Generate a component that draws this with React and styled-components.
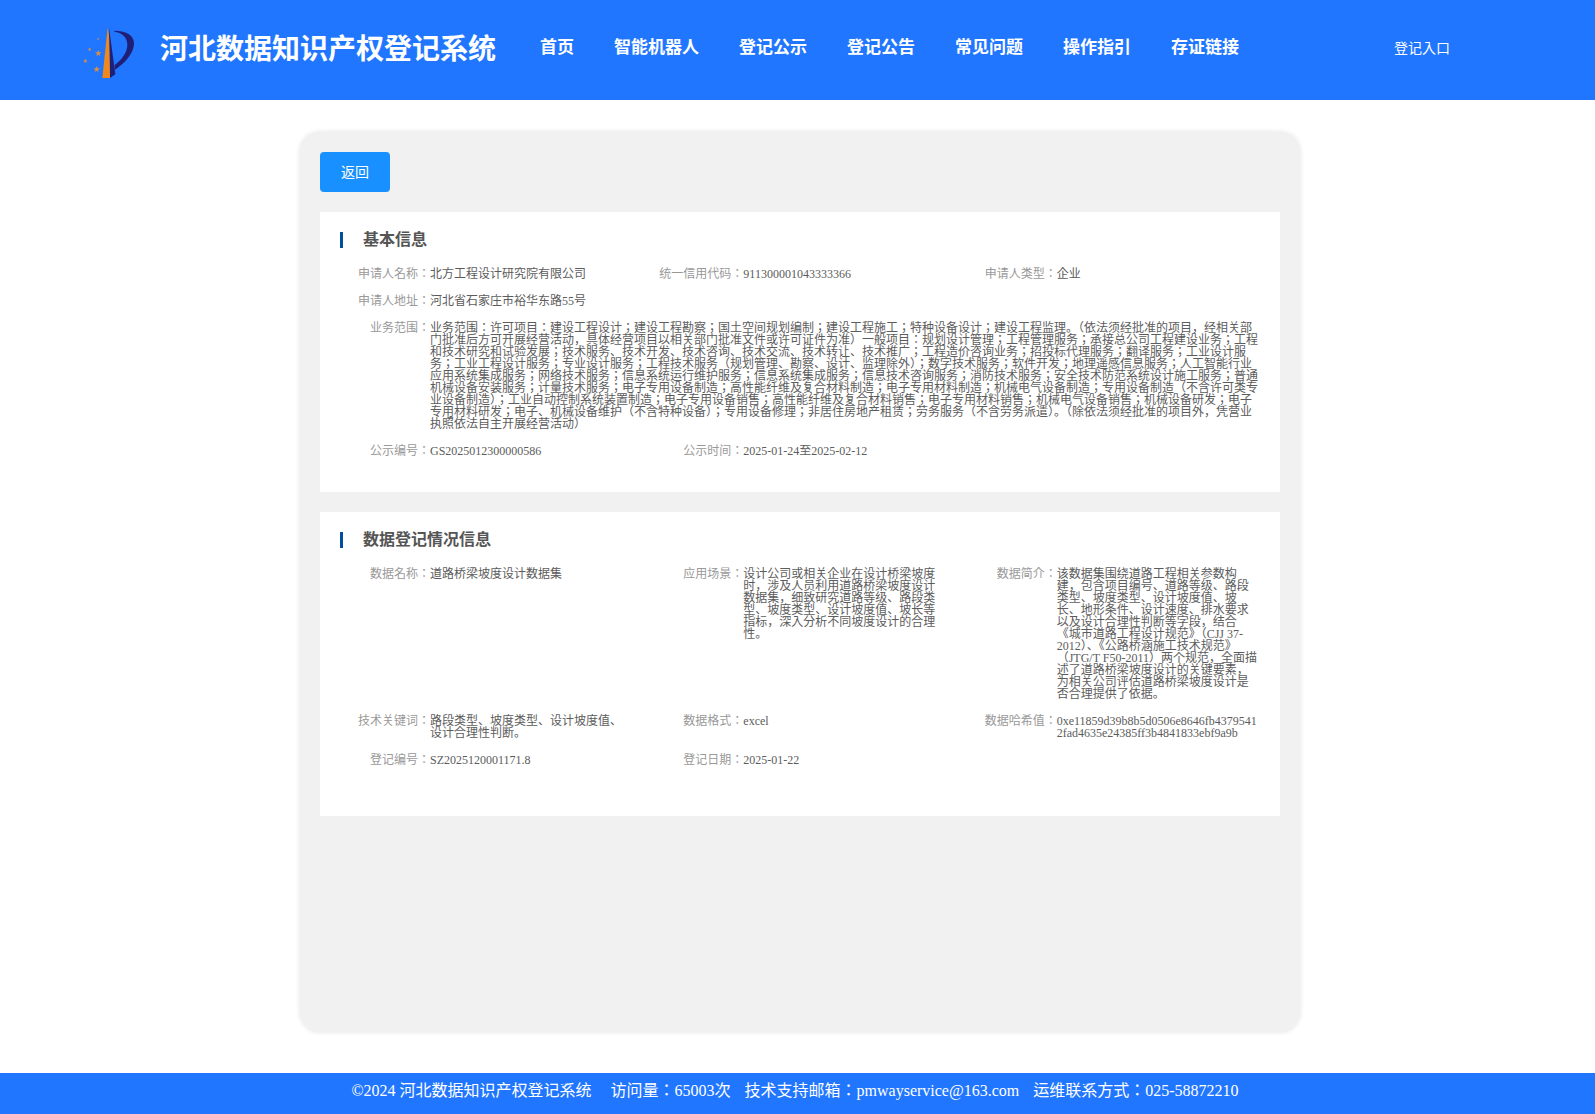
import React from 'react'
import styled, { createGlobalStyle } from 'styled-components'

const GlobalStyle = createGlobalStyle`
  html, body {
    margin: 0;
    padding: 0;
    background: #fff;
    font-family: "Liberation Serif", "Noto Sans CJK JP", serif;
  }
`

const Header = styled.header`
  height: 100px;
  background-color: #2176ff;
  display: flex;
  align-items: center;
  padding-left: 82px;
  color: #fff;
  font-family: "Liberation Sans", "Noto Sans CJK JP", sans-serif;
`

const LogoMark = styled.svg`
  width: 56px;
  height: 56px;
  flex-shrink: 0;
`

const Title = styled.h1`
  margin: 0 0 0 22px;
  width: 336px;
  font-size: 28px;
  line-height: 40px;
  font-weight: 700;
  white-space: nowrap;
`

const Nav = styled.nav`
  display: flex;
  gap: 40px;
  margin-left: 44px;
  margin-top: -5px;
`

const NavItem = styled.a`
  font-size: 17px;
  font-weight: 700;
  line-height: 24px;
  white-space: nowrap;
`

const LoginLink = styled.a`
  margin-left: 155px;
  margin-top: -5px;
  font-size: 14px;
  line-height: 20px;
  white-space: nowrap;
`

const Panel = styled.main`
  width: 1000px;
  height: 900px;
  box-sizing: border-box;
  margin: 32px 0 41px 300px;
  padding: 20px;
  background-color: #f1f1f1;
  border-radius: 20px;
  box-shadow: 0 0 5px rgba(0, 0, 0, 0.12);
`

const BackButton = styled.button`
  display: block;
  width: 70px;
  height: 40px;
  padding: 0 0 2px;
  border: none;
  border-radius: 4px;
  background-color: #1890ff;
  color: #fff;
  font-family: inherit;
  font-size: 14px;
`

const Card = styled.section`
  margin-top: 20px;
  padding: 20px 0 ${(p) => p.$bottom}px 20px;
  background-color: #fff;
`

const SectionTitle = styled.h2`
  margin: 0 0 20px;
  height: 16px;
  padding-left: 20px;
  border-left: 3px solid #00509e;
  color: #555;
  font-family: "Liberation Sans", "Noto Sans CJK JP", sans-serif;
  font-size: 16px;
  line-height: 16px;
  font-weight: 700;
`

const Fields = styled.div`
  display: grid;
  grid-template-columns: repeat(3, 1fr);
`

const Field = styled.div`
  display: flex;
  margin-bottom: 15px;
  font-size: 12px;
  line-height: 12px;
  grid-column: ${(p) => (p.$wide ? '1 / -1' : 'auto')};
`

const Label = styled.span`
  flex: 0 0 90px;
  text-align: right;
  color: #999;
  white-space: nowrap;
`

const Value = styled.div`
  flex: 1;
  min-width: 0;
  padding-right: 20px;
  color: #5c5c5c;
  word-break: break-word;
`

const Footer = styled.footer`
  height: 41px;
  padding-right: 5px;
  background-color: #2176ff;
  color: #fff;
  font-size: 16px;
  line-height: 36px;
  display: flex;
  justify-content: center;
  white-space: nowrap;
`

const FooterItem = styled.span`
  margin-left: ${(p) => p.$gap}px;
`

const navItems = ['首页', '智能机器人', '登记公示', '登记公告', '常见问题', '操作指引', '存证链接']

const scope = '业务范围：许可项目：建设工程设计；建设工程勘察；国土空间规划编制；建设工程施工；特种设备设计；建设工程监理。（依法须经批准的项目，经相关部门批准后方可开展经营活动，具体经营项目以相关部门批准文件或许可证件为准）一般项目：规划设计管理；工程管理服务；承接总公司工程建设业务；工程和技术研究和试验发展；技术服务、技术开发、技术咨询、技术交流、技术转让、技术推广；工程造价咨询业务；招投标代理服务；翻译服务；工业设计服务；工业工程设计服务；专业设计服务；工程技术服务（规划管理、勘察、设计、监理除外）；数字技术服务；软件开发；地理遥感信息服务；人工智能行业应用系统集成服务；网络技术服务；信息系统运行维护服务；信息系统集成服务；信息技术咨询服务；消防技术服务；安全技术防范系统设计施工服务；普通机械设备安装服务；计量技术服务；电子专用设备制造；高性能纤维及复合材料制造；电子专用材料制造；机械电气设备制造；专用设备制造（不含许可类专业设备制造）；工业自动控制系统装置制造；电子专用设备销售；高性能纤维及复合材料销售；电子专用材料销售；机械电气设备销售；机械设备研发；电子专用材料研发；电子、机械设备维护（不含特种设备）；专用设备修理；非居住房地产租赁；劳务服务（不含劳务派遣）。（除依法须经批准的项目外，凭营业执照依法自主开展经营活动）'

const basicInfo = [
  { label: '申请人名称：', value: '北方工程设计研究院有限公司' },
  { label: '统一信用代码：', value: '911300001043333366' },
  { label: '申请人类型：', value: '企业' },
  { label: '申请人地址：', value: '河北省石家庄市裕华东路55号', wide: true },
  { label: '业务范围：', value: scope, wide: true },
  { label: '公示编号：', value: 'GS2025012300000586' },
  { label: '公示时间：', value: '2025-01-24至2025-02-12' },
]

const dataInfo = [
  { label: '数据名称：', value: '道路桥梁坡度设计数据集' },
  { label: '应用场景：', value: '设计公司或相关企业在设计桥梁坡度时，涉及人员利用道路桥梁坡度设计数据集，细致研究道路等级、路段类型、坡度类型、设计坡度值、坡长等指标，深入分析不同坡度设计的合理性。' },
  { label: '数据简介：', value: '该数据集围绕道路工程相关参数构建，包含项目编号、道路等级、路段类型、坡度类型、设计坡度值、坡长、地形条件、设计速度、排水要求以及设计合理性判断等字段，结合《城市道路工程设计规范》（CJJ 37-2012）、《公路桥涵施工技术规范》（JTG/T F50-2011）两个规范，全面描述了道路桥梁坡度设计的关键要素，为相关公司评估道路桥梁坡度设计是否合理提供了依据。' },
  { label: '技术关键词：', value: '路段类型、坡度类型、设计坡度值、设计合理性判断。' },
  { label: '数据格式：', value: 'excel' },
  { label: '数据哈希值：', value: '0xe11859d39b8b5d0506e8646fb43795412fad4635e24385ff3b4841833ebf9a9b' },
  { label: '登记编号：', value: 'SZ2025120001171.8' },
  { label: '登记日期：', value: '2025-01-22' },
]

const footerItems = [
  { text: '©2024 河北数据知识产权登记系统', gap: 0 },
  { text: '访问量：65003次', gap: 19 },
  { text: '技术支持邮箱：pmwayservice@163.com', gap: 14 },
  { text: '运维联系方式：025-58872210', gap: 14 },
]

const Star = ({ x, y, r }) => {
  const points = []
  for (let i = 0; i < 10; i++) {
    const radius = i % 2 === 0 ? r : r * 0.42
    const angle = (Math.PI / 5) * i - Math.PI / 2
    points.push(`${x + radius * Math.cos(angle)},${y + radius * Math.sin(angle)}`)
  }
  return <polygon points={points.join(' ')} fill="#dd8f3f" />
}

const Logo = () => (
  <LogoMark viewBox="36 21 168 168">
    <path d="M117 38 L136 178 L120 189 Z" fill="#1f1f78" />
    <path d="M113 38 L97 189 L120 189 L117 60 Z" fill="#f0881c" />
    <path d="M133 47 C165 47 192 58 192 85 C192 115 165 145 134 165 L134 150 C155 135 172 112 172 90 C172 65 155 53 133 50 Z" fill="#1f1f78" />
    <Star x={84} y={72} r={4} />
    <Star x={59} y={103} r={6} />
    <Star x={85} y={115} r={10} />
    <Star x={46} y={138} r={7} />
    <Star x={80} y={163} r={10} />
  </LogoMark>
)

const FieldList = ({ items }) => (
  <Fields>
    {items.map((item) => (
      <Field key={item.label} $wide={item.wide}>
        <Label>{item.label}</Label>
        <Value>{item.value}</Value>
      </Field>
    ))}
  </Fields>
)

const App = () => (
  <>
    <GlobalStyle />
    <Header>
      <Logo />
      <Title>河北数据知识产权登记系统</Title>
      <Nav>
        {navItems.map((item) => (
          <NavItem key={item}>{item}</NavItem>
        ))}
      </Nav>
      <LoginLink>登记入口</LoginLink>
    </Header>
    <Panel>
      <BackButton>返回</BackButton>
      <Card $bottom={20}>
        <SectionTitle>基本信息</SectionTitle>
        <FieldList items={basicInfo} />
      </Card>
      <Card $bottom={35}>
        <SectionTitle>数据登记情况信息</SectionTitle>
        <FieldList items={dataInfo} />
      </Card>
    </Panel>
    <Footer>
      {footerItems.map((item) => (
        <FooterItem key={item.text} $gap={item.gap}>{item.text}</FooterItem>
      ))}
    </Footer>
  </>
)

export default App
